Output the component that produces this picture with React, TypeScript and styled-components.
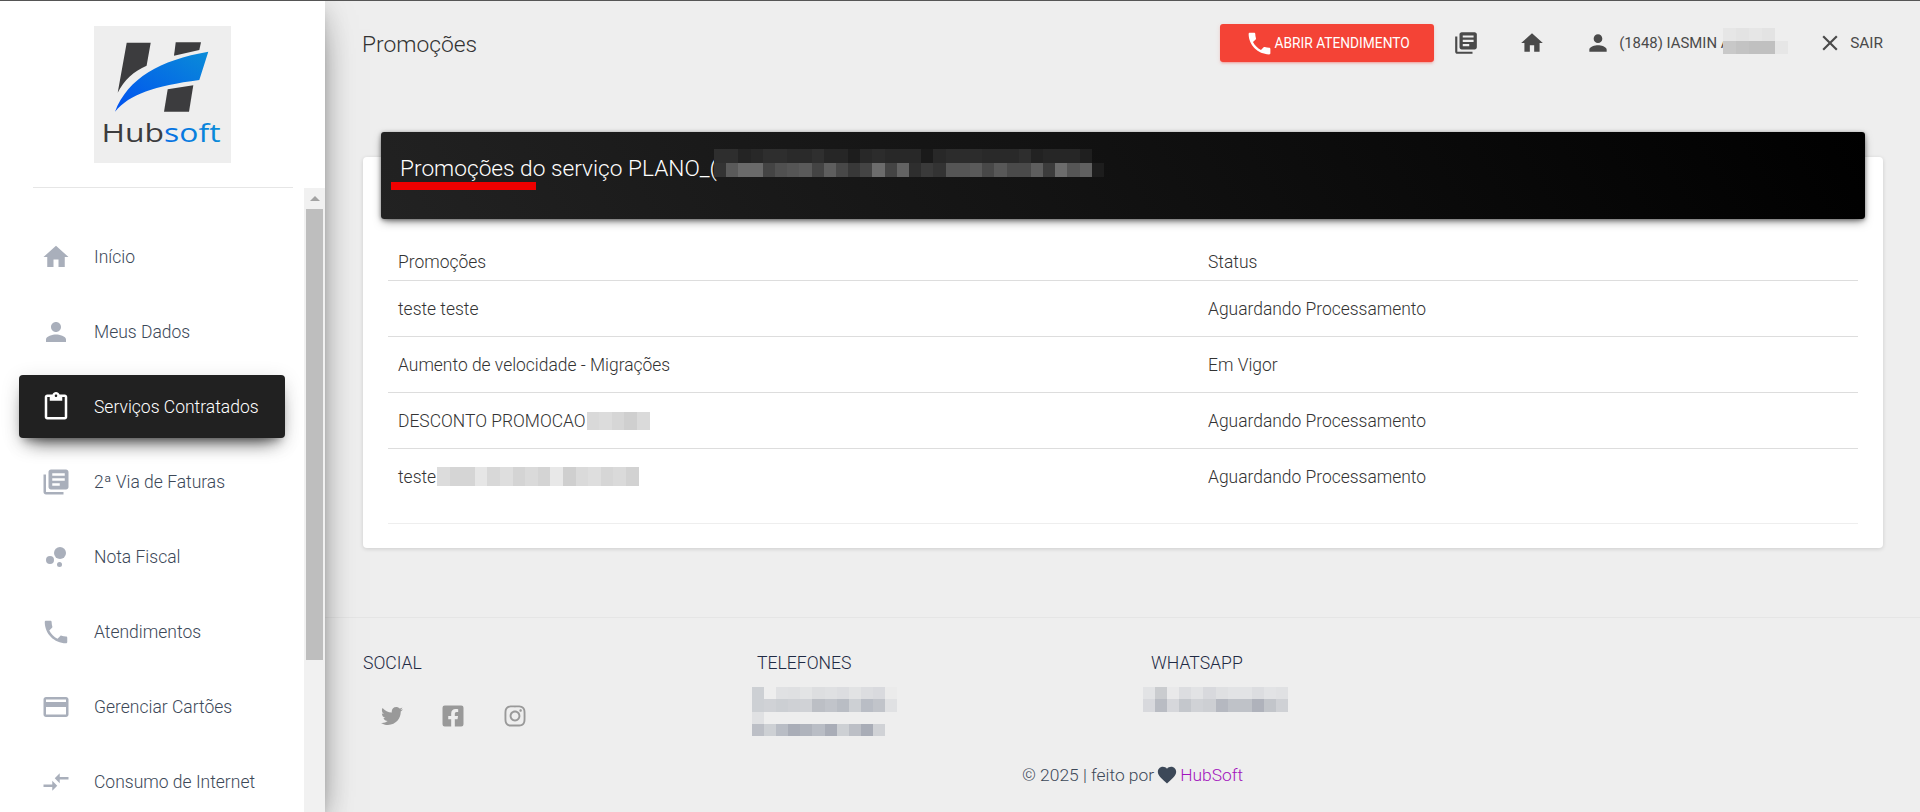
import React from "react";
import styled, { createGlobalStyle } from "styled-components";
import {
    MdHome,
    MdPerson,
    MdContentPaste,
    MdLibraryBooks,
    MdBubbleChart,
    MdPhone,
    MdCreditCard,
    MdCompareArrows,
    MdClose,
    MdFavorite,
} from "react-icons/md";
import { FaTwitter, FaFacebookSquare, FaInstagram } from "react-icons/fa";

const navItems = [
    { label: "Início", icon: MdHome },
    { label: "Meus Dados", icon: MdPerson },
    { label: "Serviços Contratados", icon: MdContentPaste, active: true },
    { label: "2ª Via de Faturas", icon: MdLibraryBooks },
    { label: "Nota Fiscal", icon: MdBubbleChart },
    { label: "Atendimentos", icon: MdPhone },
    { label: "Gerenciar Cartões", icon: MdCreditCard },
    { label: "Consumo de Internet", icon: MdCompareArrows },
];

const GlobalStyle = createGlobalStyle`
    html, body {
        margin: 0;
        padding: 0;
        height: 100%;
        overflow: hidden;
        background: #eeeeee;
        font-family: "Roboto", "Liberation Sans", sans-serif;
        font-weight: 300;
    }
    * {
        box-sizing: border-box;
    }
`;

// blurred bits of the screenshot, one colour per cell
const Mosaic = ({ rows, w, h }: { rows: string[][]; w: number; h: number }) => (
    <MosaicBox>
        {rows.map((row, i) => (
            <MosaicRow key={i}>
                {row.map((c, j) => (
                    <MosaicCell key={j} $c={c} $w={w} $h={h} />
                ))}
            </MosaicRow>
        ))}
    </MosaicBox>
);

const Logo = () => (
    <svg width="137" height="137" viewBox="0 0 137 137">
        <defs>
            <linearGradient id="swoosh" x1="0" y1="1" x2="1" y2="0">
                <stop offset="0" stopColor="#0050f0" />
                <stop offset="1" stopColor="#0a8cd8" />
            </linearGradient>
            <linearGradient id="soft" x1="0" y1="0" x2="1" y2="0">
                <stop offset="0" stopColor="#0050f0" />
                <stop offset="1" stopColor="#0a8cd8" />
            </linearGradient>
        </defs>
        <rect width="137" height="137" fill="#eeeeee" />
        <path d="M32.7 16.7H56.7L52.6 39.7C40 45 30 54 23.7 66.7Z" fill="#3c3c3e" />
        <path d="M81.7 16.3H107L105.3 24L80 29.7Z" fill="#3c3c3e" />
        <path d="M73.7 63.3L99.3 59.3L95 85.7H70Z" fill="#3c3c3e" />
        <path d="M21 85.7C34 52 66 34 114.3 25.7L105.3 54C60 60 36 68 21 85.7Z" fill="url(#swoosh)" />
        <LogoText x="7.5" y="115.5" textLength="119" lengthAdjust="spacingAndGlyphs">
            <tspan fill="#3c3c3e">Hub</tspan>
            <tspan fill="url(#soft)">soft</tspan>
        </LogoText>
    </svg>
);

const App: React.FunctionComponent = () => {
    return (
        <Page>
            <GlobalStyle />
            <Sidebar>
                <LogoWrap>
                    <Logo />
                </LogoWrap>
                <SideDivider />
                <NavArea>
                    <NavList>
                        {navItems.map((item) => (
                            <NavItem key={item.label} $active={item.active}>
                                <item.icon size={30} />
                                <NavLabel>{item.label}</NavLabel>
                            </NavItem>
                        ))}
                    </NavList>
                    <ScrollTrack>
                        <ScrollArrow />
                        <ScrollThumb />
                    </ScrollTrack>
                </NavArea>
            </Sidebar>

            <Main>
                <TopBar>
                    <PageTitle>Promoções</PageTitle>
                    <TopActions>
                        <CallButton>
                            <MdPhone size={29} />
                            ABRIR ATENDIMENTO
                        </CallButton>
                        <TopIcon>
                            <MdLibraryBooks size={26} />
                        </TopIcon>
                        <TopIcon>
                            <MdHome size={26} />
                        </TopIcon>
                        <UserBlock>
                            <MdPerson size={26} />
                            <UserName>(1848) IASMIN A</UserName>
                            <UserBlur>
                                <Mosaic
                                    w={13}
                                    h={13}
                                    rows={[
                                        ["#e6e6e6", "#e3e3e3", "#e6e6e6", "#e3e3e3", "transparent"],
                                        ["#c8c8c8", "#c3c3c3", "#c0c0c0", "#c0c0c0", "#e6e6e6"],
                                    ]}
                                />
                            </UserBlur>
                        </UserBlock>
                        <Logout>
                            <MdClose size={26} />
                            SAIR
                        </Logout>
                    </TopActions>
                </TopBar>

                <Content>
                    <Card>
                        <CardHeader>
                            <CardTitle>Promoções do serviço PLANO_(</CardTitle>
                            <TitleBlur>
                                <Mosaic
                                    w={12.2}
                                    h={14}
                                    rows={[
                                        ["#2e2e2e", "#2e2e2e", "#242424", "#282828", "#2e2e2e", "#2e2e2e", "#2a2a2a", "#2a2a2a", "#2f2f2f", "#262626", "#262626", "#1d1d1d", "#282828", "#2c2c2c", "#282828", "#282828", "#282828", "#1a1a1a", "#282828", "#2c2c2c", "#2c2c2c", "#2c2c2c", "#292929", "#292929", "#292929", "#2e2e2e", "#222222", "#262626", "#262626", "#262626", "#1f1f1f", "transparent"],
                                        ["#333333", "#5a5a5a", "#6a6a6a", "#6a6a6a", "#444444", "#505050", "#555555", "#5a5a5a", "#444444", "#5e5e5e", "#484848", "#383838", "#444444", "#6c6c6c", "#444444", "#636363", "#2e2e2e", "#3a3a3a", "#333333", "#555555", "#555555", "#5a5a5a", "#484848", "#585858", "#4a4a4a", "#4a4a4a", "#5e5e5e", "#3c3c3c", "#6c6c6c", "#555555", "#606060", "#1d1d1d"],
                                    ]}
                                />
                            </TitleBlur>
                            <RedLine />
                        </CardHeader>
                        <CardBody>
                            <TableHead>
                                <CellName>Promoções</CellName>
                                <CellStatus>Status</CellStatus>
                            </TableHead>
                            <TableRow>
                                <CellName>teste teste</CellName>
                                <CellStatus>Aguardando Processamento</CellStatus>
                            </TableRow>
                            <TableRow>
                                <CellName>Aumento de velocidade - Migrações</CellName>
                                <CellStatus>Em Vigor</CellStatus>
                            </TableRow>
                            <TableRow>
                                <CellName>
                                    DESCONTO PROMOCAO
                                    <InlineBlur>
                                        <Mosaic
                                            w={12.6}
                                            h={18}
                                            rows={[["#d9d9d9", "#dcdcdc", "#d6d6d6", "#cfcfcf", "#dadada"]]}
                                        />
                                    </InlineBlur>
                                </CellName>
                                <CellStatus>Aguardando Processamento</CellStatus>
                            </TableRow>
                            <LastRow>
                                <CellName>
                                    teste
                                    <InlineBlur>
                                        <Mosaic
                                            w={12.6}
                                            h={19}
                                            rows={[["#dcdcdc", "#d5d5d5", "#d5d5d5", "#e6e6e6", "#d8d8d8", "#dedede", "#d4d4d4", "#dadada", "#d4d4d4", "#e8e8e8", "#cfcfcf", "#dadada", "#dedede", "#d6d6d6", "#dadada", "#d2d2d2"]]}
                                        />
                                    </InlineBlur>
                                </CellName>
                                <CellStatus>Aguardando Processamento</CellStatus>
                            </LastRow>
                        </CardBody>
                    </Card>
                </Content>

                <Footer>
                    <FooterColumns>
                        <FooterCol>
                            <FooterTitle>SOCIAL</FooterTitle>
                            <SocialRow>
                                <FaTwitter size={22} />
                                <FaFacebookSquare size={24} />
                                <FaInstagram size={24} />
                            </SocialRow>
                        </FooterCol>
                        <FooterCol>
                            <FooterTitle>TELEFONES</FooterTitle>
                            <FooterBlur $shift={5}>
                                <Mosaic
                                    w={12.1}
                                    h={12.3}
                                    rows={[
                                        ["#cdd0d4", "#eeeeee", "#e0e1e3", "#dfe0e2", "#e3e4e5", "#dddee0", "#dfe0e2", "#dcdde0", "#e2e3e4", "#dcdde0", "#d9dade", "#ebebeb"],
                                        ["#cdd0d4", "#d0d2d6", "#cccfd3", "#cfd1d5", "#d0d2d6", "#bcbfc5", "#c1c4ca", "#b9bdc4", "#cdd0d4", "#b9bdc5", "#c1c4ca", "#e0e1e3"],
                                        ["#e0e1e3", "#eeeeee", "#eeeeee", "#eeeeee", "#eeeeee", "#eeeeee", "#eeeeee", "#eeeeee", "#eeeeee", "#eeeeee", "#eeeeee", "#eeeeee"],
                                        ["#bcbfc6", "#cdd0d4", "#b9bdc5", "#a9adb7", "#afb3bc", "#b9bdc5", "#a9adb7", "#cdd0d4", "#bcbfc6", "#a9adb7", "#d0d2d6", "#eeeeee"],
                                    ]}
                                />
                            </FooterBlur>
                        </FooterCol>
                        <FooterCol>
                            <FooterTitle>WHATSAPP</FooterTitle>
                            <FooterBlur $shift={8}>
                                <Mosaic
                                    w={12.1}
                                    h={12.3}
                                    rows={[
                                        ["#e2e3e5", "#cacccf", "#e9e9ea", "#dcdde0", "#e2e3e5", "#d8d9dd", "#dfe0e2", "#e2e3e5", "#e2e3e5", "#dcdde0", "#e2e3e5", "#e0e1e3"],
                                        ["#d8d9dd", "#b9bcc3", "#d6d7db", "#c4c7cc", "#d0d2d6", "#cdcfd3", "#b5b8c0", "#bfc2c8", "#bfc2c8", "#afb2bb", "#c2c5ca", "#cfd1d5"],
                                    ]}
                                />
                            </FooterBlur>
                        </FooterCol>
                    </FooterColumns>
                    <Copyright>
                        © 2025 | feito por <HeartIcon><MdFavorite size={22} /></HeartIcon> <BrandLink>HubSoft</BrandLink>
                    </Copyright>
                </Footer>
            </Main>
        </Page>
    );
};

export default App;

// Styled-component

const Page = styled.div`
    display: flex;
    height: 812px;
    overflow: hidden;
    border-top: 1px solid #555555;
    background: #eeeeee;
`;

const Sidebar = styled.aside`
    flex: none;
    width: 325px;
    height: 811px;
    display: flex;
    flex-direction: column;
    background: #ffffff;
    overflow: hidden;
    box-shadow: 0 16px 38px -12px rgba(0, 0, 0, 0.56),
        0 4px 25px 0 rgba(0, 0, 0, 0.12), 0 8px 10px -5px rgba(0, 0, 0, 0.2);
    position: relative;
    z-index: 2;
`;

const LogoWrap = styled.div`
    display: flex;
    padding: 25px 0 0 94px;
`;

const LogoText = styled.text`
    font-family: "Open Sans", sans-serif;
    font-size: 25px;
    font-weight: 500;
`;

const SideDivider = styled.div`
    height: 1px;
    margin: 24px 32px 0 33px;
    background: #e6e6e6;
`;

const NavArea = styled.div`
    flex: 1;
    display: flex;
    min-height: 0;
`;

const NavList = styled.nav`
    flex: 1;
    display: flex;
    flex-direction: column;
    padding: 37px 0 0 19px;
`;

const NavItem = styled.a<{ $active?: boolean }>`
    flex: none;
    width: 266px;
    height: 63px;
    margin-bottom: 12px;
    padding-left: 22px;
    display: flex;
    align-items: center;
    gap: 23px;
    border-radius: 4px;
    color: ${(p) => (p.$active ? "#ffffff" : "#a9afbb")};
    background: ${(p) => (p.$active ? "#212121" : "transparent")};
    box-shadow: ${(p) =>
        p.$active
            ? "0 12px 20px -10px rgba(0,0,0,.75), 0 4px 20px 0 rgba(0,0,0,.12), 0 7px 8px -5px rgba(0,0,0,.3)"
            : "none"};

    span {
        color: ${(p) => (p.$active ? "#ffffff" : "#3c4858")};
    }
`;

const NavLabel = styled.span`
    font-size: 17.5px;
    white-space: nowrap;
`;

const ScrollTrack = styled.div`
    flex: none;
    width: 21px;
    display: flex;
    flex-direction: column;
    align-items: center;
    background: #f1f1f1;
`;

const ScrollArrow = styled.div`
    flex: none;
    width: 0;
    height: 5px;
    margin: 8px 0;
    border-left: 5px solid transparent;
    border-right: 5px solid transparent;
    border-bottom: 5px solid #a3a3a3;
`;

const ScrollThumb = styled.div`
    flex: none;
    width: 17px;
    height: 451px;
    background: #bebebe;
`;

const Main = styled.main`
    flex: 1;
    min-width: 0;
    display: flex;
    flex-direction: column;
`;

const TopBar = styled.header`
    height: 86px;
    padding: 0 37px 2px 37px;
    display: flex;
    align-items: center;
    justify-content: space-between;
`;

const PageTitle = styled.h1`
    margin: 0;
    padding-top: 2px;
    font-size: 22.8px;
    font-weight: 300;
    color: #333333;
`;

const TopActions = styled.div`
    display: flex;
    align-items: center;
`;

const CallButton = styled.button`
    width: 214px;
    height: 38px;
    margin-right: 19px;
    border: 0;
    border-radius: 3px;
    padding: 0;
    display: flex;
    align-items: center;
    justify-content: center;
    gap: 1px;
    background: #f44336;
    color: #ffffff;
    font-family: inherit;
    font-size: 13.75px;
    font-weight: 400;
    white-space: nowrap;
    box-shadow: 0 2px 2px 0 rgba(244, 67, 54, 0.14),
        0 3px 1px -2px rgba(244, 67, 54, 0.2), 0 1px 5px 0 rgba(244, 67, 54, 0.12);
`;

const TopIcon = styled.div`
    display: flex;
    margin-right: 40px;
    color: #4a4a4a;
`;

const UserBlock = styled.div`
    display: flex;
    align-items: center;
    gap: 8px;
    color: #4a4a4a;
`;

const UserName = styled.span`
    width: 104px;
    font-size: 14.9px;
    font-weight: 400;
    white-space: nowrap;
`;

const UserBlur = styled.div`
    position: relative;
    margin: -4px 29px 0 -8px;
`;

const Logout = styled.div`
    display: flex;
    align-items: center;
    gap: 7px;
    font-size: 15.4px;
    font-weight: 400;
    color: #4a4a4a;
`;

const Content = styled.div`
    padding: 70px 37px 0 38px;
    height: 531px;
    border-bottom: 1px solid #e5e5e5;
`;

const Card = styled.section`
    height: 391px;
    border-radius: 4px;
    background: #ffffff;
    box-shadow: 0 1px 4px 0 rgba(0, 0, 0, 0.14);
`;

const CardHeader = styled.div`
    position: relative;
    height: 87px;
    top: -25px;
    margin: 0 18px;
    padding: 21px 19px 0;
    border-radius: 3px;
    background: linear-gradient(60deg, #222222, #000000);
    box-shadow: 0 4px 10px -2px rgba(0, 0, 0, 0.5), 0 1px 4px rgba(0, 0, 0, 0.4);
`;

const CardTitle = styled.h2`
    margin: 0;
    font-size: 22.7px;
    font-weight: 300;
    line-height: 32px;
    color: #ffffff;
    white-space: nowrap;
`;

const TitleBlur = styled.div`
    position: absolute;
    left: 333px;
    top: 17px;
`;

const RedLine = styled.div`
    position: absolute;
    left: 10px;
    top: 50px;
    width: 145px;
    height: 8px;
    background: #ee0000;
`;

const CardBody = styled.div`
    margin-top: -25px;
    padding: 25px 25px 0;
`;

const TableHead = styled.div`
    height: 37px;
    padding: 0 10px;
    display: grid;
    grid-template-columns: 810px 1fr;
    align-items: center;
    border-bottom: 1px solid #dddddd;
    font-size: 17.45px;
    color: #333333;
`;

const TableRow = styled(TableHead)`
    height: 56px;
`;

const LastRow = styled(TableRow)`
    height: 75px;
    padding-bottom: 19px;
    border-bottom-color: #eeeeee;
`;

const CellName = styled.div`
    display: flex;
    align-items: center;
    white-space: nowrap;
`;

const CellStatus = styled.div`
    white-space: nowrap;
`;

const InlineBlur = styled.div`
    margin-left: 1px;
`;

const Footer = styled.footer`
    padding: 31px 36px 0 38px;
    color: #1f2a44;
`;

const FooterColumns = styled.div`
    display: grid;
    grid-template-columns: repeat(3, 394px);
`;

const FooterCol = styled.div`
    display: flex;
    flex-direction: column;
`;

const FooterTitle = styled.h3`
    margin: 0;
    font-size: 17.6px;
    line-height: 28px;
    font-weight: 300;
    color: #1f2a44;
`;

const SocialRow = styled.div`
    margin-top: 27px;
    padding-left: 18px;
    display: flex;
    align-items: center;
    gap: 38px;
    color: #999999;
`;

const FooterBlur = styled.div<{ $shift: number }>`
    margin: 10px 0 0 -${(p) => p.$shift}px;
`;

const Copyright = styled.div`
    margin-top: 28px;
    padding-left: 18px;
    display: flex;
    justify-content: center;
    align-items: center;
    gap: 2px;
    font-size: 17.4px;
    color: #3c4858;
`;

const HeartIcon = styled.span`
    display: inline-flex;
    color: #3c4858;
`;

const BrandLink = styled.a`
    color: #a314bd;
`;

const MosaicBox = styled.div`
    display: flex;
    flex-direction: column;
`;

const MosaicRow = styled.div`
    display: flex;
`;

const MosaicCell = styled.div<{ $c: string; $w: number; $h: number }>`
    flex: none;
    width: ${(p) => p.$w}px;
    height: ${(p) => p.$h}px;
    background: ${(p) => p.$c};
`;
